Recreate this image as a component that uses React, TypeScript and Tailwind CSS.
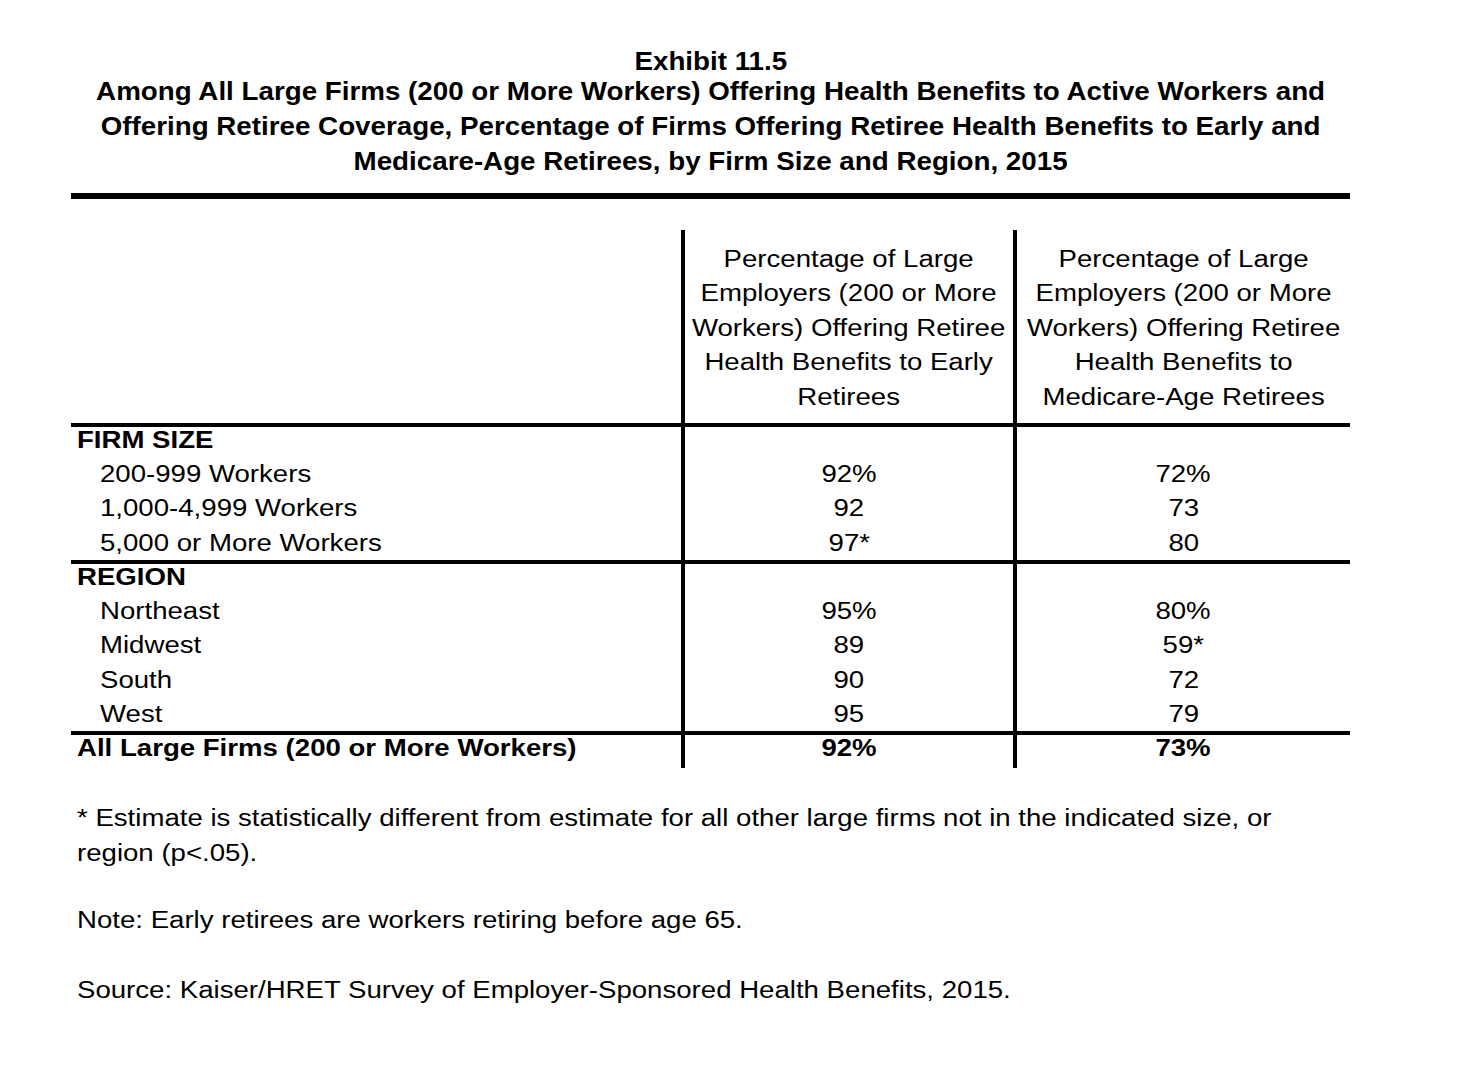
import React from "react";

const rowCls = "grid grid-cols-[610px_332px_337px]";
const midCell = "border-l-[4px] border-black text-center";
const sx = "inline-block whitespace-nowrap [transform:scaleX(1.2)]";
const sxl = "inline-block whitespace-nowrap origin-left [transform:scaleX(1.2)]";

function Row({
  label,
  a,
  b,
  indent,
  bold,
  h = "h-[34.2px]",
}: {
  label: string;
  a?: string;
  b?: string;
  indent?: boolean;
  bold?: boolean;
  h?: string;
}) {
  return (
    <div className={`${rowCls} ${h} ${bold ? "font-bold" : ""}`}>
      <div className={indent ? "pl-[29px]" : "pl-[6px]"}>
        <span className={sxl}>{label}</span>
      </div>
      <div className={midCell}>
        <span className={sx}>{a}</span>
      </div>
      <div className={midCell}>
        <span className={sx}>{b}</span>
      </div>
    </div>
  );
}

export default function App() {
  return (
    <div className="min-h-[1089px] w-[1475px] overflow-hidden bg-white text-black font-['Liberation_Sans',Arial,sans-serif]">
      <div className="ml-[71px] w-[1279px] pt-[48px]">
        <div className="text-center font-bold text-[25px]">
          <div className="leading-[26px]">
            <span className="inline-block whitespace-nowrap [transform:scaleX(1.11)]">Exhibit 11.5</span>
          </div>
          <div className="leading-[35px]">
            <span className="inline-block whitespace-nowrap [transform:scaleX(1.11)]">
              Among All Large Firms (200 or More Workers) Offering Health Benefits to Active Workers and
              <br />
              Offering Retiree Coverage, Percentage of Firms Offering Retiree Health Benefits to Early and
              <br />
              Medicare-Age Retirees, by Firm Size and Region, 2015
            </span>
          </div>
        </div>
        <div className="mt-[14px] h-[6px] bg-black" />

        <div className="mt-[31px] text-[23px] leading-[26px]">
          <div className={`${rowCls} border-b-[4px] border-black leading-[34.5px]`}>
            <div />
            <div className={`${midCell} pt-[11.5px] pb-[9px]`}>
              <span className={sx}>
                Percentage of Large
                <br />
                Employers (200 or More
                <br />
                Workers) Offering Retiree
                <br />
                Health Benefits to Early
                <br />
                Retirees
              </span>
            </div>
            <div className={`${midCell} pt-[11.5px] pb-[9px]`}>
              <span className={sx}>
                Percentage of Large
                <br />
                Employers (200 or More
                <br />
                Workers) Offering Retiree
                <br />
                Health Benefits to
                <br />
                Medicare-Age Retirees
              </span>
            </div>
          </div>

          <div className="border-b-[4px] border-black">
            <Row label="FIRM SIZE" bold />
            <Row label="200-999 Workers" a="92%" b="72%" indent />
            <Row label="1,000-4,999 Workers" a="92" b="73" indent />
            <Row label="5,000 or More Workers" a="97*" b="80" indent h="h-[30.4px]" />
          </div>
          <div className="border-b-[4px] border-black">
            <Row label="REGION" bold />
            <Row label="Northeast" a="95%" b="80%" indent />
            <Row label="Midwest" a="89" b="59*" indent />
            <Row label="South" a="90" b="72" indent />
            <Row label="West" a="95" b="79" indent h="h-[30.6px]" />
          </div>
          <Row label="All Large Firms (200 or More Workers)" a="92%" b="73%" bold h="h-[33px]" />
        </div>

        <div className="mt-[32.75px] pl-[6px] text-[23px] leading-[35px]">
          <div>
            <span className={sxl}>
              * Estimate is statistically different from estimate for all other large firms not in the indicated size, or
              <br />
              region (p&lt;.05).
            </span>
          </div>
          <div className="mt-[32px]">
            <span className={sxl}>Note: Early retirees are workers retiring before age 65.</span>
          </div>
          <div className="mt-[35px]">
            <span className={sxl}>Source: Kaiser/HRET Survey of Employer-Sponsored Health Benefits, 2015.</span>
          </div>
        </div>
      </div>
    </div>
  );
}
